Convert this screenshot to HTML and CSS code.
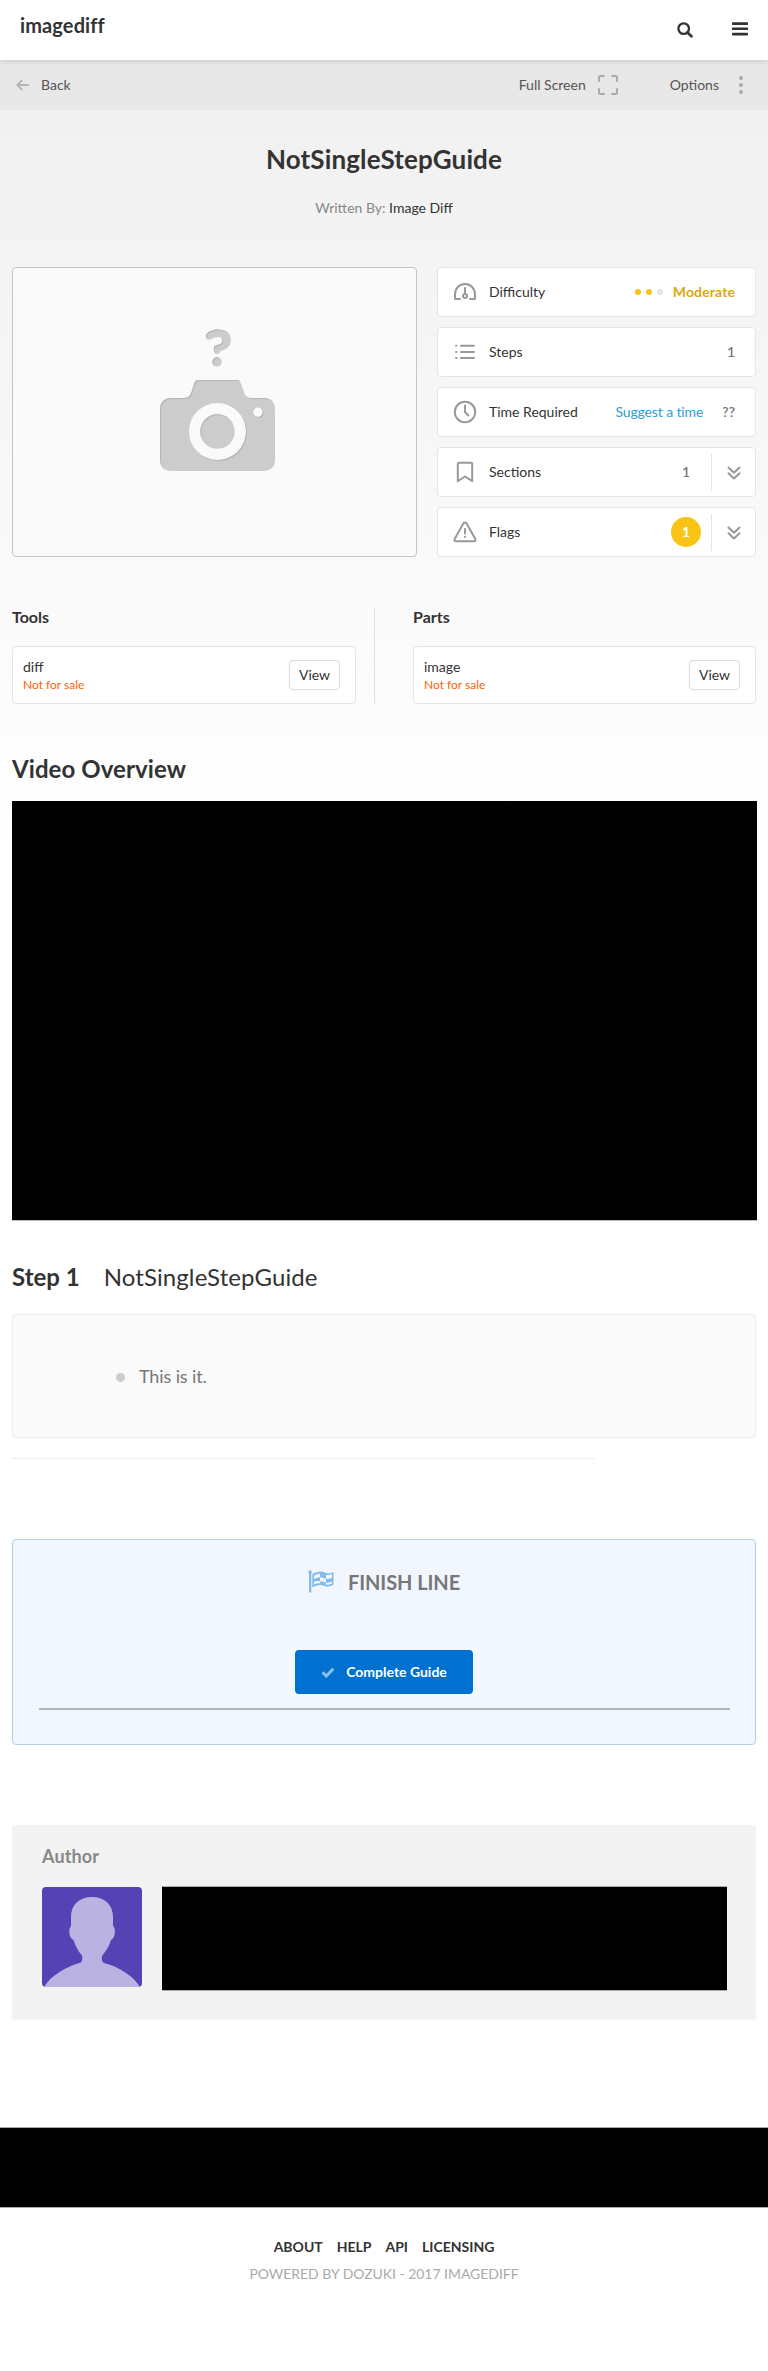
FILE: index.html
```html
<!DOCTYPE html>
<html lang="en">
<head>
<meta charset="utf-8">
<title>NotSingleStepGuide</title>
<link rel="stylesheet" href="styles.css">
</head>
<body>
<header class="site-header">
  <a class="brand">imagediff</a>
  <div class="header-icons">
    <svg width="16" height="16" viewBox="0 0 16 16" fill="none" stroke="#333" stroke-width="2.3"><circle cx="6.7" cy="6.6" r="5.3"/><path d="M10.5 10.5L14.4 14.2" stroke-width="2.7" stroke-linecap="round"/></svg>
    <svg width="16" height="14" viewBox="0 0 16 14" fill="#333"><rect width="16" height="2.7" rx=".7" y=".2"/><rect y="5.4" width="16" height="2.7" rx=".7"/><rect y="10.7" width="16" height="2.7" rx=".7"/></svg>
  </div>
</header>
<main class="page">
  <nav class="toolbar">
    <div class="tool back">
      <svg width="14" height="12" viewBox="0 0 14 12" fill="none" stroke="#b4b4b4" stroke-width="1.8" stroke-linecap="round" stroke-linejoin="round"><path d="M12.2 6H1.4M5.8 1.5L1.3 6l4.5 4.5"/></svg>
      <span>Back</span>
    </div>
    <div class="tool full">
      <span>Full Screen</span>
      <svg width="20" height="20" viewBox="0 0 20 20" fill="none" stroke="#aaa" stroke-width="2" stroke-linecap="round" stroke-linejoin="round"><path d="M1 6V2.500Q1 1 2.500 1H6M14 1h3.500Q19 1 19 2.500V6M19 14v3.500q0 1.500-1.500 1.500H14M6 19H2.500Q1 19 1 17.500V14"/></svg>
    </div>
    <div class="tool options">
      <span>Options</span>
      <svg width="4" height="18" viewBox="0 0 4 18" fill="#aaa"><circle cx="2" cy="2" r="2"/><circle cx="2" cy="9" r="2"/><circle cx="2" cy="16" r="2"/></svg>
    </div>
  </nav>

  <h1 class="title">NotSingleStepGuide</h1>
  <p class="byline">Written By: <a>Image Diff</a></p>

  <section class="intro">
    <div class="photo">
      <svg width="403" height="288" viewBox="0 0 403 288">
        <defs><filter id="lip" x="-5%" y="-5%" width="110%" height="110%"><feOffset in="SourceAlpha" dx="1" dy="1" result="o"/><feComposite in="SourceAlpha" in2="o" operator="out" result="edge"/><feFlood flood-color="#b5b5b5"/><feComposite in2="edge" operator="in" result="c"/><feMerge><feMergeNode in="SourceGraphic"/><feMergeNode in="c"/></feMerge></filter></defs>
        <g filter="url(#lip)" fill="#ccc">
          <path d="M199.500 70.500Q197 72.500 194.500 71.500Q192.500 70.500 192.800 67.500C193.500 64 200 61.500 205 61.500C213 61.500 217.800 65.500 217.800 72C217.800 78 214 81.500 207.500 83Q206.500 86 204 86Q200.700 86 200.700 79.500Q201 77.500 204 77Q209.500 76 209.500 72.500Q209.500 69 205 69Q202 69 199.500 70.500Z"/>
          <circle cx="204" cy="94" r="4.700"/>
          <path fill-rule="evenodd" d="M159 130H171Q176.500 130 178.500 124L181 116Q182 112 185 112H224Q227 112 228.200 116L231 124Q233 130 237.500 130H250Q262 130 262 142V191Q262 203 250 203H159Q147 203 147 191V142Q147 130 159 130ZM204.500 135A28.500 28.500 0 1 0 204.500 192A28.500 28.500 0 1 0 204.500 135ZM245 139.500A4.700 4.700 0 1 0 245 148.900A4.700 4.700 0 1 0 245 139.500Z"/>
          <circle cx="204.500" cy="163.500" r="17.200"/>
        </g>
      </svg>
    </div>
    <div class="facts">
      <div class="fact">
        <svg class="fi" width="24" height="24" viewBox="0 0 24 24"><path d="M7 19H2.500Q2 19 2 18.500V14.500C2 8.500 6.400 4 12 4s10 4.500 10 10.500v4q0 .5-.5.500H17M12 8v6"/><circle cx="12" cy="16" r="2"/></svg>
        <span class="label">Difficulty</span>
        <span class="dots"><i></i><i></i><i class="off"></i></span>
        <span class="value moderate">Moderate</span>
      </div>
      <div class="fact">
        <svg class="fi" width="24" height="24" viewBox="0 0 24 24"><path d="M8 5.700h13M8 12h13M8 18h13"/><path d="M2.300 5.700h1.800M2.300 12h1.800M2.300 18h1.800" stroke-linecap="butt"/></svg>
        <span class="label">Steps</span>
        <span class="value">1</span>
      </div>
      <div class="fact">
        <svg class="fi" width="24" height="24" viewBox="0 0 24 24"><circle cx="12" cy="12" r="10.200"/><path d="M12 5.500V12l3.300 3.500"/></svg>
        <span class="label">Time Required</span>
        <a class="suggest">Suggest a time</a>
        <span class="value">??</span>
      </div>
      <div class="fact expandable">
        <svg class="fi" width="24" height="24" viewBox="0 0 24 24"><path d="M6 2.700h12q1.200 0 1.200 1.200V21.200L12 16.500l-7.200 4.700V3.900Q4.800 2.700 6 2.700Z"/></svg>
        <span class="label">Sections</span>
        <span class="count">1</span>
        <span class="more"><svg width="14" height="14" viewBox="0 0 14 14"><path d="M1.500 1.500L7 6.700l5.500-5.200M1.500 7.200L7 12.400l5.500-5.200"/></svg></span>
      </div>
      <div class="fact expandable">
        <svg class="fi" width="24" height="24" viewBox="0 0 24 24"><path d="M10.300 3.600L1.700 19.100Q1 21.200 3 21.200H21Q23 21.200 22.300 19.100L13.700 3.600Q12 1.500 10.300 3.600ZM12 9v4.500M12 16.800v.3"/></svg>
        <span class="label">Flags</span>
        <span class="count badge">1</span>
        <span class="more"><svg width="14" height="14" viewBox="0 0 14 14"><path d="M1.500 1.500L7 6.700l5.500-5.200M1.500 7.200L7 12.400l5.500-5.200"/></svg></span>
      </div>
    </div>
  </section>

  <section class="supplies">
    <div class="supply tools">
      <h3>Tools</h3>
      <div class="item"><div><p class="name">diff</p><p class="sale">Not for sale</p></div><button class="view">View</button></div>
    </div>
    <div class="supply parts">
      <h3>Parts</h3>
      <div class="item"><div><p class="name">image</p><p class="sale">Not for sale</p></div><button class="view">View</button></div>
    </div>
  </section>

  <h2 class="video-title">Video Overview</h2>
  <div class="video"></div>

  <h2 class="step-title"><strong>Step 1</strong><span>NotSingleStepGuide</span></h2>
  <ul class="step-body"><li>This is it.</li></ul>
  <div class="divider"></div>

  <section class="finish">
    <h2><svg width="26" height="23" viewBox="0 0 26 23"><g fill="#82bae8"><circle cx="2" cy="2" r="1.800"/><rect x="1" y="2" width="2.300" height="20.500"/><path d="M4.300 4.200C10 .5 14 1 18 3c3 1 5 .2 7.500-1.300V14.500c-3 2-6 3-9 1.500-4-2-8-1-12.200 1.300Z"/></g><path fill="#f2f7ff" d="M6 5.600Q9 3.800 12 3.500V7.200Q9 7.500 6 9ZM12 7.300Q15 7.500 18 9V12.800Q15 11.300 12 11.200ZM18 5Q21 5.400 24 4V7.700Q21 9.200 18 8.900ZM6 11.500Q9 10.700 12 11.200V13Q9 13.200 6 14.500ZM18 12.800Q21 13.100 24 11.500V13.400Q21 15 18 14.800Z"/></svg><span>FINISH LINE</span></h2>
    <button class="complete"><svg width="14" height="11" viewBox="0 0 14 11"><path d="M1.500 5.300L5.300 9L12.300 1.700" fill="none" stroke="#8fc1ec" stroke-width="3"/></svg><span>Complete Guide</span></button>
    <div class="rule"></div>
  </section>

  <section class="author">
    <h3>Author</h3>
    <div class="author-row">
      <svg class="avatar" width="100" height="100" viewBox="0 0 100 100"><rect width="100" height="100" fill="#5543b5"/><path fill="#bab2e0" d="M50 10C63 10 71 18 71 30V39C74 41 73.500 51 69 53C67 60 63 65 60 69C59.500 73 60 75 62 76C78 80 92 90 98 100H2C9 88 24 80 39 75.500C40.500 73 40.500 71 40 68.500C36 64 33 58 31.500 53C27 51 26 42 29 39V30C29 18 37 10 50 10Z"/></svg>
      <div class="bio"></div>
    </div>
  </section>

  <div class="banner"></div>
  <footer class="footer">
    <nav><a>ABOUT</a><a>HELP</a><a>API</a><a>LICENSING</a></nav>
    <p>POWERED BY DOZUKI - 2017 IMAGEDIFF</p>
  </footer>
</main>
</body>
</html>
```

FILE: styles.css
```css
* { box-sizing: border-box; }
body { margin: 0; font: 14px/20px Lato, sans-serif; color: #333; background: #fff; }
h1, h2, h3, p, ul { margin: 0; padding: 0; }
svg { display: block; flex: none; }
button { font: inherit; cursor: pointer; }

.site-header { height: 60px; padding: 0 20px; display: flex; justify-content: space-between; background: #fff; box-shadow: 0 0 6px rgba(0,0,0,.18); position: relative; }
.brand { font-size: 20px; line-height: 24px; font-weight: 700; padding-top: 13px; letter-spacing: .12px; }
.header-icons { display: flex; gap: 39px; padding: 22px 0 0; }

.page { height: 2311px; background: linear-gradient(#f0f0f0, #fff 800px); }
.toolbar { height: 50px; display: flex; align-items: center; background: rgba(0,0,0,.035); color: #555; padding: 0 25px 0 16px; }
.tool { display: flex; align-items: center; }
.back { gap: 11px; margin-right: auto; }
.full { gap: 12px; margin-right: 52px; }
.options { gap: 20px; }

.title { font-size: 26px; line-height: 32px; text-align: center; margin-top: 33px; letter-spacing: .13px; }
.byline { text-align: center; margin-top: 23px; color: #888; }
.byline a { color: #333; }

.intro { display: flex; gap: 20px; margin: 49px 12px 0; }
.photo { width: 405px; height: 290px; border: 1px solid #c4c4c4; border-radius: 4px; background: #fafafa; }
.facts { flex: 1; display: flex; flex-direction: column; gap: 10px; }
.fact { height: 50px; display: flex; align-items: center; background: #fff; border: 1px solid #e5e5e5; border-radius: 4px; padding: 0 20px 0 15px; }
.fi, .more svg { fill: none; stroke: #999; stroke-width: 2; stroke-linecap: round; stroke-linejoin: round; }
.label { margin: 0 auto 0 12px; }
.value, .count { color: #777; font-weight: 600; }
.moderate { color: #dba90c; font-weight: 700; letter-spacing: .12px; }
.dots { display: flex; gap: 5px; margin-right: 10px; }
.dots i { width: 6px; height: 6px; border-radius: 50%; background: #f9c414; }
.dots .off { background: #e5e5e5; }
.suggest { color: #2a9fd8; margin-right: 19px; letter-spacing: -.12px; }
.expandable { padding-right: 0; }
.count { width: 30px; height: 30px; line-height: 30px; text-align: center; margin-right: 10px; }
.badge { background: #f9c414; color: #fff; border-radius: 50%; font-weight: 700; }
.more { width: 44px; height: 37px; border-left: 1px solid #e5e5e5; display: flex; align-items: center; justify-content: center; padding-top: 2px; }

.supplies { display: flex; margin: 50px 12px 0; }
.supply h3 { font-size: 16px; line-height: 20px; margin-bottom: 19px; }
.tools { width: 363px; padding-right: 18px; border-right: 1px solid #e0e0e0; }
.parts { flex: 1; padding-left: 38px; }
.item { height: 58px; display: flex; justify-content: space-between; align-items: center; background: #fff; border: 1px solid #e5e5e5; border-radius: 4px; padding: 0 15px 0 10px; }
.name { line-height: 18px; }
.sale { font-size: 12px; line-height: 17px; color: #f96206; }
.view { width: 51px; height: 30px; padding: 0; background: #fff; border: 1px solid #ddd; border-radius: 4px; color: #333; }

.video-title { font-size: 24px; line-height: 30px; margin: 50px 12px 17px; letter-spacing: .08px; }
.video { height: 420px; margin: 0 11px 0 12px; background: #000; border-bottom: 1px solid #bbb; }
.step-title { font-size: 24px; line-height: 30px; margin: 41px 12px 22px; font-weight: 400; display: flex; gap: 24px; }
.step-title span { letter-spacing: .1px; }
.step-body { height: 124px; margin: 0 12px; border: 1px solid #eee; border-radius: 4px; background: #fafafa; padding: 49px 0 0 103px; list-style: none; }
.step-body li { display: flex; align-items: center; gap: 14px; font-size: 18px; line-height: 24px; color: #777; letter-spacing: -.12px; }
.step-body li::before { content: ""; width: 9px; height: 9px; margin-top: 2px; border-radius: 50%; background: #ccc; }
.divider { height: 1px; width: 583px; margin: 20px 12px 0; background: #eee; }

.finish { height: 206px; margin: 80px 12px 0; padding: 0 25px; border: 1px solid #b0d0ea; border-radius: 4px; background: #f2f7ff; display: flex; flex-direction: column; align-items: center; }
.finish h2 { font-size: 20px; line-height: 24px; margin-top: 30px; color: #777; display: flex; gap: 14px; letter-spacing: -.08px; }
.complete { width: 178px; height: 44px; margin-top: 56px; border: 0; border-radius: 4px; background: #0071d0; color: #fff; font-weight: 700; display: flex; align-items: center; justify-content: center; gap: 11px; padding: 0; }
.rule { align-self: stretch; height: 2px; margin: 14px 0 0 1px; background: #b0b8bc; }

.author { height: 195px; margin: 80px 12px 0; padding: 20px 29px 0 30px; border-radius: 4px; background: #f3f3f3; }
.author h3 { font-size: 18px; line-height: 22px; color: #888; letter-spacing: .1px; }
.author-row { display: flex; gap: 20px; margin-top: 19px; }
.avatar { border-radius: 4px; margin-top: 1px; }
.bio { flex: 1; height: 105px; background: #000; border: solid #aaa; border-width: 1px 0; }
.banner { height: 81px; margin-top: 107px; background: #000; border: solid #aaa; border-width: 1px 0; }
.footer { text-align: center; padding-top: 29px; }
.footer nav { display: flex; justify-content: center; gap: 14px; font-weight: 700; }
.footer p { margin-top: 7px; color: #aaa; letter-spacing: -.04px; }
```
